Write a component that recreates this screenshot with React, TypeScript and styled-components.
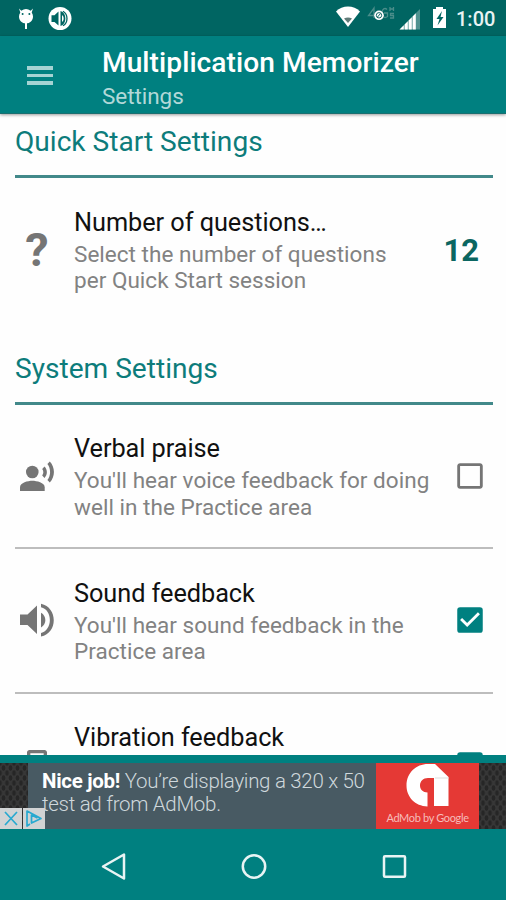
import React from "react";
import styled, { createGlobalStyle } from "styled-components";
import { MdCheckBox, MdCheckBoxOutlineBlank, MdVibration } from "react-icons/md";

const teal = "#008080";

const GlobalStyle = createGlobalStyle`
  * { box-sizing: border-box; }
  body { margin: 0; background: #fff; font-family: Roboto, sans-serif; }
`;

const Screen = styled.div`
  display: flex;
  flex-direction: column;
  width: 506px;
  height: 900px;
  overflow: hidden;
  background: #fefefe;
`;

const StatusBar = styled.div`
  flex: none;
  display: flex;
  justify-content: space-between;
  height: 36px;
  background: #006562;
  color: #fff;
`;

const StatusGroup = styled.div`
  display: flex;
  svg { display: block; }
`;

const Clock = styled.span`
  width: 50px;
  padding-top: 7px;
  font-size: 20px;
  font-weight: 500;
  line-height: 25px;
  color: #e9f3f3;
`;

const AppBar = styled.header`
  flex: none;
  display: flex;
  height: 78px;
  background: ${teal};
  border-bottom: 1px solid #1b6f70;
  box-shadow: 0 1px 3px rgba(0, 0, 0, 0.4);
  z-index: 1;
`;

const MenuButton = styled.button`
  display: flex;
  flex-direction: column;
  gap: 4px;
  width: 102px;
  padding: 30px 0 0 26.5px;
  border: 0;
  background: none;
`;

const MenuLine = styled.span`
  width: 26.5px;
  height: 3.5px;
  background: #a5d3d3;
`;

const Titles = styled.div`
  display: flex;
  flex-direction: column;
`;

const Title = styled.h1`
  margin: 10px 0 0;
  font-size: 28.1px;
  font-weight: 500;
  line-height: 34px;
  letter-spacing: 0.08px;
  color: #fff;
`;

const Subtitle = styled.span`
  margin-top: 3px;
  font-size: 22.5px;
  line-height: 27px;
  letter-spacing: -0.05px;
  color: #b2d8d8;
`;

const List = styled.main`
  flex: 1;
  min-height: 0;
  overflow: hidden;
  padding: 0 13px 0 15px;
`;

const SectionHeader = styled.h2`
  height: 64px;
  margin: 0;
  padding-top: 11px;
  border-bottom: 3px solid #42898a;
  font-size: 28.1px;
  font-weight: 400;
  line-height: 33px;
  color: #0d7c7b;
`;

const Row = styled.section<{ $last?: boolean }>`
  display: flex;
  align-items: center;
  height: 144.5px;
  margin-bottom: ${(p) => (p.$last ? "18px" : "0")};
  border-bottom: ${(p) => (p.$last ? "0" : "2px solid #bdbdbd")};
`;

const IconCell = styled.div`
  flex: none;
  display: flex;
  justify-content: center;
  width: 44px;
  color: #757575;
`;

const QuestionMark = styled.span`
  font-size: 47px;
  font-weight: 700;
  line-height: 48px;
`;

const RowText = styled.div<{ $raised?: boolean }>`
  flex: 1;
  min-height: 88.8px;
  padding: 0 0 ${(p) => (p.$raised ? "2px" : "0")} 15px;
  white-space: nowrap;
`;

const RowTitle = styled.div`
  font-size: 25.3px;
  line-height: 36px;
  letter-spacing: -0.05px;
  color: #111;
`;

const RowDesc = styled.div`
  font-size: 22.5px;
  line-height: 26.4px;
  letter-spacing: 0.03px;
  color: #828282;
`;

const Control = styled.div`
  flex: none;
  display: flex;
  justify-content: center;
  width: 34px;
  margin-right: 6px;
  color: ${teal};
`;

const Count = styled.span`
  margin-right: 14px;
  font-size: 31px;
  font-weight: 700;
  color: #0b6661;
`;

const AdArea = styled.aside`
  flex: none;
  display: flex;
  position: relative;
  height: 74px;
  border-top: 8px solid ${teal};
  background-color: #373737;
  background-image:
    radial-gradient(#262626 1.6px, transparent 2.2px),
    radial-gradient(#262626 1.6px, transparent 2.2px);
  background-size: 7px 10px;
  background-position: 0 0, 3.5px 5px;
  padding: 0 27px 0 28px;
`;

const AdCopy = styled.p`
  flex: 1;
  margin: 0;
  padding: 7px 0 0 14px;
  background: #485a63;
  color: #cfd8dc;
  font-size: 20.5px;
  font-weight: 300;
  line-height: 23px;
  letter-spacing: -0.3px;
  white-space: nowrap;
  b { font-weight: 700; color: #fff; }
`;

const AdLogo = styled.div`
  display: flex;
  flex-direction: column;
  align-items: center;
  width: 103px;
  background: #e53935;
  color: #f6bcba;
  font: 400 11px/12px Lato, sans-serif;
  letter-spacing: -0.35px;
  white-space: nowrap;
`;

const AdBadges = styled.div`
  position: absolute;
  left: 0;
  bottom: 0;
  display: flex;
  gap: 1px;
`;

const Badge = styled.span`
  display: block;
  width: 22px;
  height: 21px;
  background: #d1d3d4;
  svg { display: block; }
`;

const NavBar = styled.nav`
  flex: none;
  height: 71px;
  display: flex;
  justify-content: center;
  gap: 100px;
  background: ${teal};
  padding: 18px 0 0 1px;
`;

function VoiceIcon() {
  return (
    <svg width="34" height="32" viewBox="20 460 34 32" fill="currentColor">
      <circle cx="32.3" cy="472" r="6.3" />
      <path d="M20 491v-3.800c0-4.400 8-6.400 12.300-6.400s12.400 2 12.400 6.400V491z" />
      <path d="M44.500 466.500l-2.300 2.600c1.500 2 1.500 4.300 0 6.300l2.300 2.500c3.200-3.200 3.200-8.200 0-11.400z" />
      <path d="M49.800 461.500l-2.400 2.500c3.600 4.700 3.600 11.300 0 16l2.400 2.500c5.500-5.900 5.500-15.100 0-21z" />
    </svg>
  );
}

function SoundIcon() {
  return (
    <svg width="34" height="34" viewBox="20 603 34 34" fill="currentColor">
      <path d="M20 614.500h7.500L37 605.500v28.500l-9.500-9H20z" />
      <path d="M41 612.800c5.800 3 5.800 11.700 0 14.700z" />
      <path d="M41 603.700v3.500c11.800 2.600 11.800 22.800 0 25.800v3.500c17-3.500 17-29.200 0-32.800z" />
    </svg>
  );
}

interface ItemProps {
  icon: React.ReactNode;
  title: string;
  lines: string[];
  control: React.ReactNode;
  last?: boolean;
}

function Item({ icon, title, lines, control, last }: ItemProps) {
  return (
    <Row $last={last}>
      <IconCell>{icon}</IconCell>
      <RowText $raised={last}>
        <RowTitle>{title}</RowTitle>
        {lines.map((l) => (
          <RowDesc key={l}>{l}</RowDesc>
        ))}
      </RowText>
      {control}
    </Row>
  );
}

function Check({ on }: { on?: boolean }) {
  return (
    <Control>
      {on ? <MdCheckBox size={34} /> : <MdCheckBoxOutlineBlank size={34} color="#757575" />}
    </Control>
  );
}

export default function App() {
  return (
    <Screen>
      <GlobalStyle />
      <StatusBar>
        <StatusGroup>
          <svg width="80" height="36" fill="#fff">
            <path d="M19 8.500l2.300 2.200a7.500 7 0 0 1 9.400 0L33 8.500l-1.300 4a7 7 0 0 1 1.300 4c0 4-3 7-7 7s-7-3-7-7a7 7 0 0 1 1.300-4z" />
            <path d="M25 23h2v6h-2z" />
            <g fill="#006562">
              <circle cx="22.6" cy="14" r="1" />
              <circle cx="29.4" cy="14" r="1" />
            </g>
            <circle cx="60" cy="18.5" r="11.5" />
            <g fill="#006562">
              <path d="M51.500 15.200h3l4-3.700v14L54.500 22h-3z" />
              <path d="M60.500 11c6.500 1.500 6.500 13.500 0 15z" />
            </g>
            <path d="M62 15c2.200 1.500 2.200 5.500 0 7z" />
            <path d="M63 11.200c5.300 3 5.300 11.600 0 14.600" fill="none" stroke="#006562" strokeWidth="1.3" />
          </svg>
        </StatusGroup>
        <StatusGroup>
          <svg width="121" height="36" viewBox="335 0 121 36" fill="#fff">
            <path d="M336 11.500a17 17 0 0 1 24 0L348 27z" />
            <path d="M344 18.500q4-2 8 0l-4 4.500z" fill="#617b78" />
            <g fill="none" stroke="#4a8d8a" strokeWidth="1.3">
              <path d="M374 18V8l-5.500 7.500h7M387 9.500c-2-2-5-1-5 3.500s3 5.500 5.500 3.500V13H384M390 7v4m3.500-4v4m-3.500-2h3.500M394 13.500h-3.500v2h3v2.500H390" />
            </g>
            <circle cx="379" cy="15.3" r="4.8" />
            <circle cx="379" cy="15.3" r="2.7" fill="none" stroke="#176967" strokeWidth="1" />
            <path d="M377.500 17l3-3.500" stroke="#176967" />
            <path d="M399.500 29.500L420 9v20.500z" fill="#4f9290" />
            <path d="M399.500 29.500L403.800 25.200v4.300zM404.600 24.400l3.200-3.200v8.300h-3.200zM408.600 20.400l3.200-3.200v12.300h-3.200zM412.600 16.400l3.200-3.200v16.300h-3.200z" />
            <path d="M433 9h3V7h7v2h3v19h-13z" />
            <path d="M442 11l-5.500 8h3l-2 6.500 6-8.500h-3z" fill="#006562" />
          </svg>
          <Clock>1:00</Clock>
        </StatusGroup>
      </StatusBar>
      <AppBar>
        <MenuButton aria-label="Menu">
          <MenuLine />
          <MenuLine />
          <MenuLine />
        </MenuButton>
        <Titles>
          <Title>Multiplication Memorizer</Title>
          <Subtitle>Settings</Subtitle>
        </Titles>
      </AppBar>
      <List>
        <SectionHeader>Quick Start Settings</SectionHeader>
        <Item
          last
          icon={<QuestionMark>?</QuestionMark>}
          title="Number of questions…"
          lines={["Select the number of questions", "per Quick Start session"]}
          control={<Count>12</Count>}
        />
        <SectionHeader>System Settings</SectionHeader>
        <Item
          icon={<VoiceIcon />}
          title="Verbal praise"
          lines={["You'll hear voice feedback for doing", "well in the Practice area"]}
          control={<Check />}
        />
        <Item
          icon={<SoundIcon />}
          title="Sound feedback"
          lines={["You'll hear sound feedback in the", "Practice area"]}
          control={<Check on />}
        />
        <Item
          icon={<MdVibration size={40} />}
          title="Vibration feedback"
          lines={[]}
          control={<Check on />}
        />
      </List>
      <AdArea>
        <AdCopy>
          <b>Nice job!</b> You’re displaying a 320 x 50
          <br />
          test ad from AdMob.
        </AdCopy>
        <AdLogo>
          <svg width="103" height="49" viewBox="376 763 103 49">
            <path
              d="M427.500 806.500C415 806 406.500 797 406.500 785.500C406.500 773 416 764 428 764H435L448.500 777V806H434V778H428C423 778 420 781.500 420 785.500S423 792.500 427.500 792.500z"
              fill="#fff"
            />
            <path d="M435 778h13.500" stroke="#ddd" />
          </svg>
          AdMob by Google
        </AdLogo>
        <AdBadges>
          <Badge>
            <svg width="22" height="21" fill="none" stroke="#28a9d0" strokeWidth="1.7">
              <path d="M5 4l12 13M17 4L5 17" />
            </svg>
          </Badge>
          <Badge>
            <svg width="22" height="21" fill="none" stroke="#28a9d0" strokeWidth="1.7" strokeLinejoin="round">
              <path d="M7 16l-3 2V3l14 7.500L8.500 15V7l6 3" />
            </svg>
          </Badge>
        </AdBadges>
      </AdArea>
      <NavBar>
        <svg width="40" height="40" viewBox="0 0 40 40" fill="none" stroke="#e8f4f4" strokeWidth="2.5" strokeLinejoin="round">
          <path d="M30 7.500v24L9 19.500z" />
        </svg>
        <svg width="40" height="40" viewBox="0 0 40 40" fill="none" stroke="#e8f4f4" strokeWidth="2.5">
          <circle cx="20" cy="19.5" r="11.2" />
        </svg>
        <svg width="40" height="40" viewBox="0 0 40 40" fill="none" stroke="#e8f4f4" strokeWidth="2.5" strokeLinejoin="round">
          <rect x="10" y="9.3" width="21" height="20.5" rx="1" />
        </svg>
      </NavBar>
    </Screen>
  );
}
